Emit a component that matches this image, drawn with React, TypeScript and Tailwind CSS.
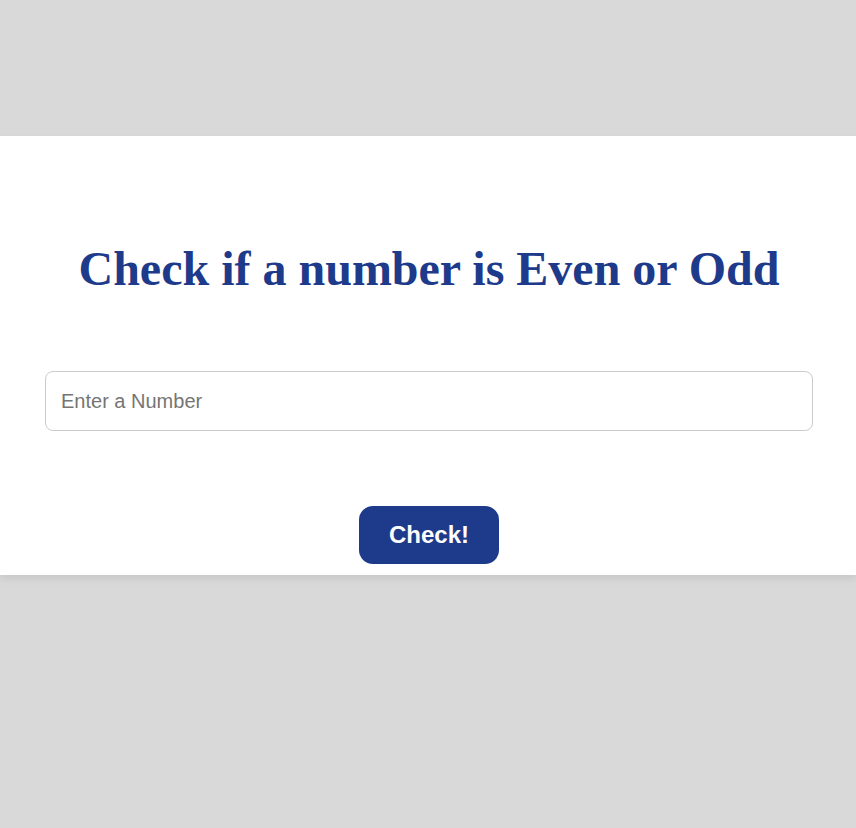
export default function App() {
  return (
    <div className="min-h-[828px] bg-[#d9d9d9] pt-[136px]">
      <div className="bg-white h-[439px] pl-[2px] shadow-[0_4px_8px_rgba(0,0,0,0.08)] flex flex-col items-center">
        <h1 className="mt-[105px] text-[48px] leading-[56px] font-bold text-[#1e3a8a] [font-family:'Liberation_Serif',serif]">
          Check if a number is Even or Odd
        </h1>
        <input
          type="text"
          placeholder="Enter a Number"
          className="mt-[74px] w-[768px] h-[60px] border border-[#cccccc] rounded-lg px-[15px] text-[20px] text-[#333] placeholder:text-[#757575] outline-none [font-family:'Liberation_Sans',sans-serif]"
        />
        <button className="mt-[75px] w-[140px] h-[58px] rounded-[14px] bg-[#1e3a8a] text-white text-[24px] font-bold [font-family:'Liberation_Sans',sans-serif]">
          Check!
        </button>
      </div>
    </div>
  );
}
